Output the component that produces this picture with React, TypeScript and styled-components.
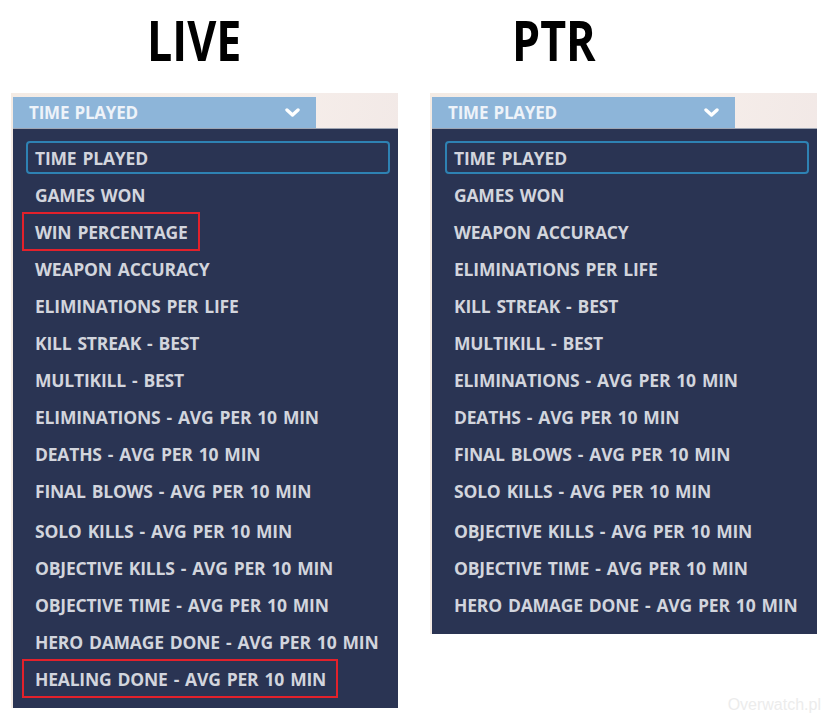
import styled, { createGlobalStyle } from "styled-components";

const GlobalStyle = createGlobalStyle`
  body {
    margin: 0;
    background: #ffffff;
    font-family: "Open Sans", "Liberation Sans", sans-serif;
  }
`;

const Page = styled.div`
  position: relative;
  width: 831px;
  height: 723px;
  display: flex;
  gap: 32px;
  padding-left: 11px;
  box-sizing: border-box;
  overflow: hidden;
`;

const Column = styled.div`
  width: 387px;
  display: flex;
  flex-direction: column;
`;

const TitleRow = styled.div<{ $offset: number }>`
  height: 93px;
  padding-left: ${(p) => p.$offset}px;
  box-sizing: border-box;
`;

const Title = styled.h1`
  margin: 0;
  display: inline-block;
  padding-top: 9px;
  font-family: "Open Sans", "Liberation Sans", sans-serif;
  font-weight: 700;
  font-size: 56px;
  line-height: 60px;
  color: #000;
  transform: scaleX(0.8);
  transform-origin: left center;
`;

const Frame = styled.div`
  padding: 4px 0 0 2px;
  background: linear-gradient(100deg, #f4ebe4 0%, #f6eeea 55%, #efe5e4 100%);
`;

const Header = styled.div`
  width: 303px;
  height: 31px;
  background: #8db5d9;
  display: flex;
  align-items: center;
  justify-content: space-between;
  padding: 0 16px 0 16px;
  box-sizing: border-box;
  color: #eef3f9;
  font-weight: 700;
  font-size: 17px;
  letter-spacing: -0.2px;
  word-spacing: 1px;
`;

const Panel = styled.div`
  background: #2a3453;
  border-top: 1px solid #9ea5b3;
  padding: 12px 8px 13px 13px;
  display: flex;
  flex-direction: column;
  gap: 4px;
`;

const Row = styled.div<{ $selected?: boolean; $extra?: boolean }>`
  height: 33px;
  box-sizing: border-box;
  border: 2px solid ${(p) => (p.$selected ? "#2e82b3" : "transparent")};
  border-radius: 4px;
  margin-top: ${(p) => (p.$extra ? 3 : 0)}px;
  padding-left: 7px;
  display: flex;
  align-items: stretch;
  color: #d2d5dd;
  font-weight: 700;
  font-size: 17.5px;
  letter-spacing: -0.2px;
  word-spacing: 1.7px;
  white-space: nowrap;
`;

const Label = styled.span<{ $marked?: boolean }>`
  position: relative;
  display: inline-flex;
  align-items: center;

  ${(p) =>
    p.$marked &&
    `
    &::after {
      content: "";
      position: absolute;
      left: -13px;
      right: -12px;
      top: -5px;
      bottom: -5px;
      border: 2px solid #e3212b;
    }
  `}
`;

const Watermark = styled.div`
  position: absolute;
  right: 10px;
  bottom: 9px;
  font-family: "Liberation Sans", sans-serif;
  font-size: 16px;
  color: #ececec;
`;

const Chevron = () => (
  <svg width="15" height="10" viewBox="0 0 15 10">
    <polyline
      points="2,2 7.5,7 13,2"
      fill="none"
      stroke="#ffffff"
      strokeWidth="3.4"
      strokeLinecap="round"
      strokeLinejoin="round"
    />
  </svg>
);

type Item = { label: string; marked?: boolean };

const liveItems: Item[] = [
  { label: "TIME PLAYED" },
  { label: "GAMES WON" },
  { label: "WIN PERCENTAGE", marked: true },
  { label: "WEAPON ACCURACY" },
  { label: "ELIMINATIONS PER LIFE" },
  { label: "KILL STREAK - BEST" },
  { label: "MULTIKILL - BEST" },
  { label: "ELIMINATIONS - AVG PER 10 MIN" },
  { label: "DEATHS - AVG PER 10 MIN" },
  { label: "FINAL BLOWS - AVG PER 10 MIN" },
  { label: "SOLO KILLS - AVG PER 10 MIN" },
  { label: "OBJECTIVE KILLS - AVG PER 10 MIN" },
  { label: "OBJECTIVE TIME - AVG PER 10 MIN" },
  { label: "HERO DAMAGE DONE - AVG PER 10 MIN" },
  { label: "HEALING DONE - AVG PER 10 MIN", marked: true },
];

const ptrItems: Item[] = [
  { label: "TIME PLAYED" },
  { label: "GAMES WON" },
  { label: "WEAPON ACCURACY" },
  { label: "ELIMINATIONS PER LIFE" },
  { label: "KILL STREAK - BEST" },
  { label: "MULTIKILL - BEST" },
  { label: "ELIMINATIONS - AVG PER 10 MIN" },
  { label: "DEATHS - AVG PER 10 MIN" },
  { label: "FINAL BLOWS - AVG PER 10 MIN" },
  { label: "SOLO KILLS - AVG PER 10 MIN" },
  { label: "OBJECTIVE KILLS - AVG PER 10 MIN" },
  { label: "OBJECTIVE TIME - AVG PER 10 MIN" },
  { label: "HERO DAMAGE DONE - AVG PER 10 MIN" },
];

function StatDropdown({ title, offset, items }: { title: string; offset: number; items: Item[] }) {
  return (
    <Column>
      <TitleRow $offset={offset}>
        <Title>{title}</Title>
      </TitleRow>
      <Frame>
        <Header>
          <span>TIME PLAYED</span>
          <Chevron />
        </Header>
        <Panel>
          {items.map((item, i) => (
            <Row key={item.label} $selected={i === 0} $extra={i === 10}>
              <Label $marked={item.marked}>{item.label}</Label>
            </Row>
          ))}
        </Panel>
      </Frame>
    </Column>
  );
}

export default function App() {
  return (
    <Page>
      <GlobalStyle />
      <StatDropdown title="LIVE" offset={136} items={liveItems} />
      <StatDropdown title="PTR" offset={82} items={ptrItems} />
      <Watermark>Overwatch.pl</Watermark>
    </Page>
  );
}
